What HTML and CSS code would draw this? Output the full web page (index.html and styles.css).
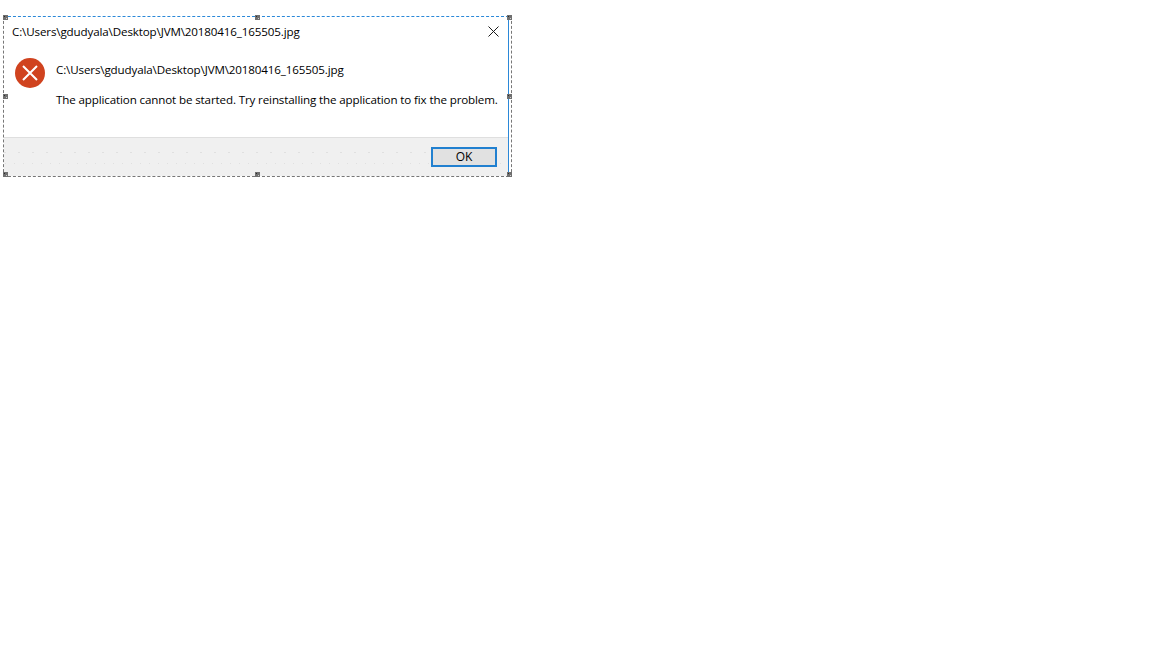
FILE: index.html
```html
<!DOCTYPE html>
<html lang="en">
<head>
<meta charset="utf-8">
<title>Error dialog</title>
<link rel="stylesheet" href="styles.css">
</head>
<body>
<div class="selection">
  <div class="dialog">
    <div class="titlebar">
      <span class="title">C:\Users\gdudyala\Desktop\JVM\20180416_165505.jpg</span>
      <svg class="close" width="11" height="11" viewBox="0 0 11 11"><path d="M.5.5l10 10M10.5.5l-10 10" stroke="#1a1a1a" stroke-width="1" fill="none"/></svg>
    </div>
    <div class="content">
      <svg class="erricon" width="30" height="30" viewBox="0 0 30 30"><circle cx="15" cy="15" r="15" fill="#d0431f"/><path d="M8 8l14 14M22 8L8 22" stroke="#fff" stroke-width="2" fill="none"/></svg>
      <div class="messages">
        <p class="msg">C:\Users\gdudyala\Desktop\JVM\20180416_165505.jpg</p>
        <p class="msg">The application cannot be started. Try reinstalling the application to fix the problem.</p>
      </div>
    </div>
    <div class="footer">
      <button class="ok">OK</button>
    </div>
  </div>
  <i class="handle h-tl"></i><i class="handle h-tc"></i><i class="handle h-tr"></i>
  <i class="handle h-ml"></i><i class="handle h-mr"></i>
  <i class="handle h-bl"></i><i class="handle h-bc"></i><i class="handle h-br"></i>
</div>
</body>
</html>
```
FILE: styles.css
```css
html, body { margin: 0; padding: 0; background: #fff; }
body { width: 1152px; height: 648px; overflow: hidden; font-family: "Open Sans", "Noto Sans", sans-serif; color: #000; }
.selection { position: relative; box-sizing: border-box; width: 509px; height: 161px; margin: 16px 0 0 3px; border-right: 1px dashed #777; }
.dialog { box-sizing: border-box; width: 506px; height: 161px; display: flex; flex-direction: column; background: #fff;
  border-top: 1px dashed #2b88d8; border-right: 1px solid #2b88d8; border-left: 1px dashed #777; border-bottom: 1px dashed #777; }
.titlebar { height: 29px; display: flex; align-items: center; justify-content: space-between; padding: 0 9px 0 8px; flex: none; }
.title, .msg { font-size: 11.6px; line-height: 16px; letter-spacing: -0.13px; white-space: nowrap; }
.content { flex: 1; display: flex; gap: 11px; padding: 12px 0 0 11px; }
.erricon { flex: none; }
.messages { display: flex; flex-direction: column; gap: 14px; padding-top: 4px; }
.msg { margin: 0; }
.footer { flex: none; height: 39px; box-sizing: border-box; border-top: 1px solid #dfdfdf; background-color: #f0f0f0;
  background-image: radial-gradient(circle, #e0e0e0 0.6px, transparent 0.8px), radial-gradient(circle, #e0e0e0 0.6px, transparent 0.8px);
  background-size: 14px 39px, 9px 39px; background-position: 8px -5px, 6px 6px;
  display: flex; justify-content: flex-end; align-items: flex-start; padding: 9px 11px 0 0; }
.ok { box-sizing: border-box; width: 66px; height: 20px; padding: 0; background: #e1e1e1; border: 2px solid #2180d0; border-radius: 0;
  font: 12px/16px "Open Sans", "Noto Sans", sans-serif; color: #000; }
.handle { position: absolute; width: 5px; height: 5px; background-color: #6f6f6f;
  background-image: radial-gradient(circle, #2a2a2a 0.6px, transparent 0.9px), radial-gradient(circle, #cfcfcf 0.6px, transparent 0.9px);
  background-size: 5px 5px, 5px 5px; background-position: -1px -1px, 1px 1px; }
.h-tl { left: 0; top: -1px; }
.h-tc { left: 252px; top: -1px; }
.h-tr { left: 504px; top: -1px; }
.h-ml { left: 0; top: 78px; }
.h-mr { left: 504px; top: 78px; }
.h-bl { left: 0; top: 156px; }
.h-bc { left: 252px; top: 156px; }
.h-br { left: 504px; top: 156px; }
```
